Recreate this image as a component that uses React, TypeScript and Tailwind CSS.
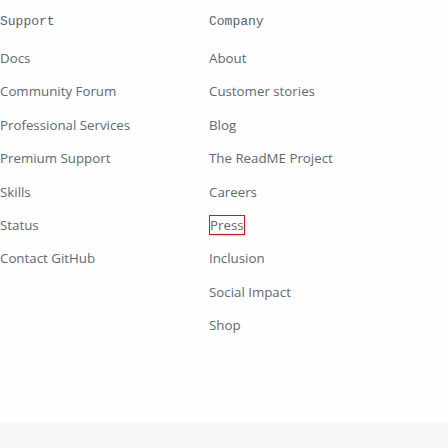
const support = ['Docs', 'Community Forum', 'Professional Services', 'Premium Support', 'Skills', 'Status', 'Contact GitHub'];
const company = ['About', 'Customer stories', 'Blog', 'The ReadME Project', 'Careers', 'Press', 'Inclusion', 'Social Impact', 'Shop'];

const Column = ({ title, links }: { title: string; links: string[] }) => (
  <div>
    <h2 className="h-[20px] leading-[20px] text-[13px] font-normal text-[#59636e] font-['Liberation_Mono',monospace]">{title}</h2>
    <ul className="mt-[16px] flex flex-col gap-[13.4px]">
      {links.map((l) => (
        <li key={l} className="h-[20px] flex items-center">
          <a
            href="#"
            className={
              l === 'Press'
                ? 'h-[20px] leading-[18px] text-[13.3px] text-[#5f6874] border border-[#ff0000]'
                : 'h-[20px] leading-[20px] text-[13.3px] text-[#5f6874]'
            }
          >
            {l}
          </a>
        </li>
      ))}
    </ul>
  </div>
);

export default function App() {
  return (
    <div className="w-[448px] h-[448px] bg-[#fefefe] flex flex-col font-['Open_Sans',sans-serif]">
      <div className="flex-1 grid grid-cols-[209px_1fr] pt-[12px]">
        <Column title="Support" links={support} />
        <Column title="Company" links={company} />
      </div>
      <div className="h-[26px] bg-[#f6f8fa]" />
    </div>
  );
}
